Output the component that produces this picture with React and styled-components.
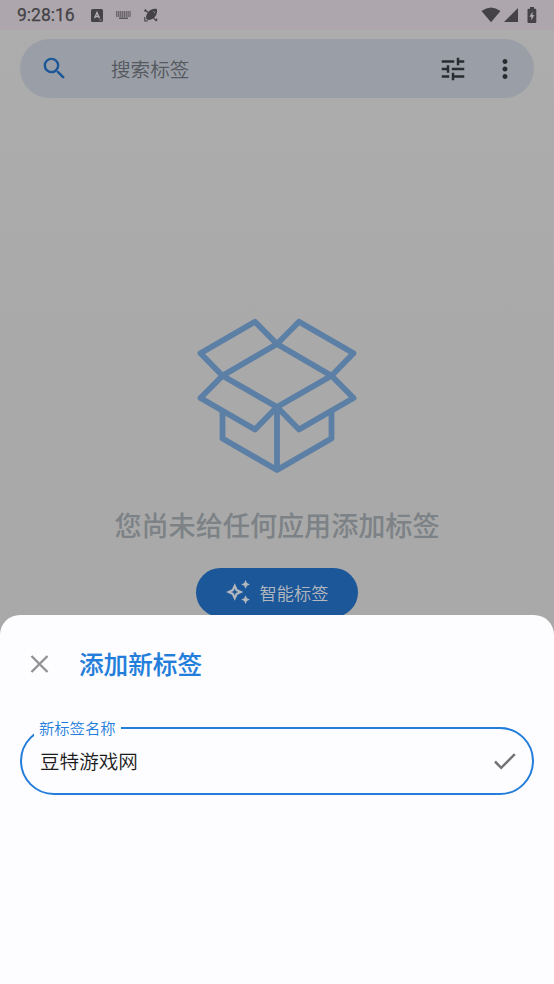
import React, { useState } from "react";
import styled, { createGlobalStyle } from "styled-components";

function App() {
  const [name, setName] = useState("豆特游戏网");

  return (
    <>
      <GlobalStyle />
      <Screen>
        <StatusBar>
          <Clock>9:28:16</Clock>
          <Notices>
            <svg width="12" height="13" viewBox="0 0 12 13">
              <rect width="12" height="13" rx="1.5" fill="#444246" />
              <path d="M3.5 9.3 6 3.4 8.5 9.3M4.4 7.5H7.6" fill="none" stroke="#b5afb5" strokeWidth="1.3" />
              <path d="M8.5 11H10.5" stroke="#b5afb5" strokeWidth="0.8" />
            </svg>
            <svg width="15" height="8" viewBox="0 0 15 8">
              <path d="M0 1H15M0 3H15M0 5H15" stroke="#57545a" strokeWidth="1.5" strokeDasharray="1.4 0.5" />
              <path d="M3 7.2H12" stroke="#57545a" strokeWidth="1.5" />
            </svg>
            <svg width="14" height="14" viewBox="0 0 14 14">
              <path d="M2.6 11.4C1 8 3.6 3.6 7 1.8Q9.5 0.5 13 1Q13.5 4.5 12.2 7C10.4 10.4 6 13 2.6 11.4Z" fill="#444246" />
              <path d="M9.3 3.2 10.9 4.8" stroke="#ada7ad" strokeWidth="0.8" />
              <path d="M4 4.5 1 1.5M1 4V1.5M0.8 9V13H4M9.5 10 12.5 13M12.7 10.5V13" fill="none" stroke="#444246" strokeWidth="1.1" />
            </svg>
          </Notices>
          <Signals>
            <svg width="20" height="16" viewBox="0 0 20 16">
              <path d="M0.5 4Q10-3 19.5 4L10 15.3Z" fill="#444246" />
            </svg>
            <svg width="14" height="14" viewBox="0 0 14 14">
              <path d="M14 0V14H0Z" fill="#444246" />
            </svg>
            <svg width="10" height="16" viewBox="0 0 10 16">
              <path d="M3 0H7V1.7H8.2Q9.3 1.7 9.3 2.8V15Q9.3 16 8.2 16H1.6Q0.5 16 0.5 15V2.8Q0.5 1.7 1.6 1.7H3Z" fill="#444246" />
              <path d="M5.5 4.5V8H7.4L4.3 13.5V9.8H2.4Z" fill="#ada7ad" />
            </svg>
          </Signals>
        </StatusBar>

        <SearchBar>
          <svg width="29" height="29" viewBox="0 0 24 24" fill="#1c5799">
            <path d="M15.5 14h-.79l-.28-.27A6.471 6.471 0 0 0 16 9.5 6.5 6.5 0 1 0 9.5 16c1.61 0 3.09-.59 4.23-1.57l.27.28v.79l5 4.99L20.49 19l-4.99-5zm-6 0C7.01 14 5 11.99 5 9.5S7.01 5 9.5 5 14 7.01 14 9.5 11.99 14 9.5 14z" />
          </svg>
          <Placeholder>搜索标签</Placeholder>
          <svg width="30" height="30" viewBox="0 0 24 24" fill="#292c30">
            <path d="M3 17v2h6v-2H3zM3 5v2h10V5H3zm10 16v-2h8v-2h-8v-2h-2v6h2zM7 9v2H3v2h4v2h2V9H7zm14 4v-2H11v2h10zm-6-4h2V7h4V5h-4V3h-2v6z" />
          </svg>
          <Dots width="30" height="30" viewBox="0 0 24 24" fill="#292c30">
            <path d="M12 8c1.1 0 2-.9 2-2s-.9-2-2-2-2 .9-2 2 .9 2 2 2zm0 2c-1.1 0-2 .9-2 2s.9 2 2 2 2-.9 2-2-.9-2-2-2zm0 6c-1.1 0-2 .9-2 2s.9 2 2 2 2-.9 2-2-.9-2-2-2z" />
          </Dots>
        </SearchBar>

        <Empty>
          <svg width="162" height="156" viewBox="196 318 162 156" fill="none" stroke="#5c7fa6" strokeWidth="5.8" strokeLinejoin="round">
            <path d="M277 344 255 321.8 200.5 353.3 222.5 375.7 277 344 299 321.8 353.5 353.3 331.5 375.7Z" />
            <path d="M222.5 375.7 200.5 398 255 429.5 277 407 299 429.5 353.5 398 331.5 375.7 277 407Z" />
            <path d="M222.5 411V438.5L277 470 331.5 438.5V411M277 407V470" />
          </svg>
          <EmptyText>您尚未给任何应用添加标签</EmptyText>
          <SmartButton>
            <svg width="26" height="26" viewBox="0 0 24 24" fill="#b4b8bd">
              <path d="m19 9 1.25-2.75L23 5l-2.75-1.25L19 1l-1.25 2.75L15 5l2.75 1.25L19 9zm0 6-1.25 2.75L15 19l2.75 1.25L19 23l1.25-2.75L23 19l-2.75-1.25L19 15zm-7.5-5.5L9 4 6.5 9.5 1 12l5.5 2.5L9 20l2.5-5.5L17 12l-5.5-2.5zm-1.51 3.49L9 15.17l-.99-2.18L5.83 12l2.18-.99L9 8.83l.99 2.18 2.18.99-2.18.99z" />
            </svg>
            <span>智能标签</span>
          </SmartButton>
        </Empty>

        <Sheet>
          <SheetHeader>
            <svg width="19" height="18" viewBox="0 0 19 18">
              <path d="M1.5 1 17.5 17M17.5 1 1.5 17" stroke="#929294" strokeWidth="2.4" />
            </svg>
            <h2>添加新标签</h2>
          </SheetHeader>
          <Field>
            <legend>新标签名称</legend>
            <FieldRow>
              <input value={name} onChange={(e) => setName(e.target.value)} />
              <svg width="22" height="17" viewBox="0 0 22 17">
                <path d="M1 8.5 7.2 14.8 20.8 1.2" fill="none" stroke="#747477" strokeWidth="2.5" />
              </svg>
            </FieldRow>
          </Field>
        </Sheet>
      </Screen>
    </>
  );
}

export default App;

const GlobalStyle = createGlobalStyle`
  body {
    margin: 0;
    font-family: Roboto, "Noto Sans CJK SC", sans-serif;
  }
  svg {
    display: block;
    flex-shrink: 0;
  }
`;

const Screen = styled.div`
  width: 554px;
  height: 984px;
  display: flex;
  flex-direction: column;
  overflow: hidden;
  background: linear-gradient(#adadad, #a9a9a9 360px);
`;

const StatusBar = styled.header`
  height: 30px;
  flex-shrink: 0;
  box-sizing: border-box;
  padding: 0 17px;
  display: flex;
  align-items: center;
  background: #ada7ad;
`;

const Clock = styled.span`
  width: 74px;
  font-size: 17.5px;
  color: #444246;
  -webkit-text-stroke: 0.25px #444246;
`;

const Notices = styled.div`
  display: flex;
  align-items: center;
  gap: 13px;
`;

const Signals = styled.div`
  margin-left: auto;
  display: flex;
  align-items: center;
  gap: 3px;

  svg:last-child {
    margin-left: 6px;
  }
`;

const SearchBar = styled.div`
  height: 59px;
  flex-shrink: 0;
  box-sizing: border-box;
  margin: 9px 20px 0;
  padding: 0 14px 0 20px;
  display: flex;
  align-items: center;
  border-radius: 30px;
  background: #9a9ea7;
`;

const Placeholder = styled.span`
  flex: 1;
  padding-left: 42px;
  font-size: 19.6px;
  font-weight: 350;
  color: #55585d;
`;

const Dots = styled.svg`
  margin-left: 22px;
`;

const Empty = styled.main`
  height: 517px;
  flex-shrink: 0;
  box-sizing: border-box;
  padding-top: 220px;
  display: flex;
  flex-direction: column;
  align-items: center;
`;

const EmptyText = styled.p`
  margin: 33px 0 21px;
  font-size: 27.1px;
  line-height: 40px;
  font-weight: 500;
  color: #7c8286;
`;

const SmartButton = styled.button`
  width: 162px;
  height: 49px;
  flex-shrink: 0;
  display: flex;
  align-items: center;
  justify-content: center;
  gap: 9px;
  padding: 0 1px 1px 0;
  border: none;
  border-radius: 25px;
  background: #1c5799;
  color: #b4b8bd;
  font-family: inherit;
  font-size: 17.2px;
  font-weight: 350;
`;

const Sheet = styled.section`
  flex: 1;
  z-index: 1;
  border-radius: 20px 20px 0 0;
  background: #fdfdff;
`;

const SheetHeader = styled.div`
  padding: 29px 30px 0;
  display: flex;
  align-items: center;
  gap: 30px;

  h2 {
    margin: 0;
    padding-top: 3px;
    font-size: 24.6px;
    line-height: 37px;
    font-weight: 500;
    color: #237ddb;
    -webkit-text-stroke: 0.15px #237ddb;
  }
`;

const Field = styled.fieldset`
  height: 78px;
  box-sizing: border-box;
  margin: 33px 20px 0;
  padding: 0 16px 0 12px;
  border: 2px solid #237ddb;
  border-radius: 34px;

  legend {
    padding: 3px 5px 0;
    font-size: 15.3px;
    line-height: 18px;
    font-weight: 350;
    color: #237ddb;
  }
`;

const FieldRow = styled.div`
  height: 46px;
  display: flex;
  align-items: center;

  input {
    flex: 1;
    min-width: 0;
    padding: 0 6px 2px;
    border: none;
    outline: none;
    background: transparent;
    font-family: inherit;
    font-size: 19.6px;
    font-weight: 350;
    color: #1b1b1d;
  }
`;
